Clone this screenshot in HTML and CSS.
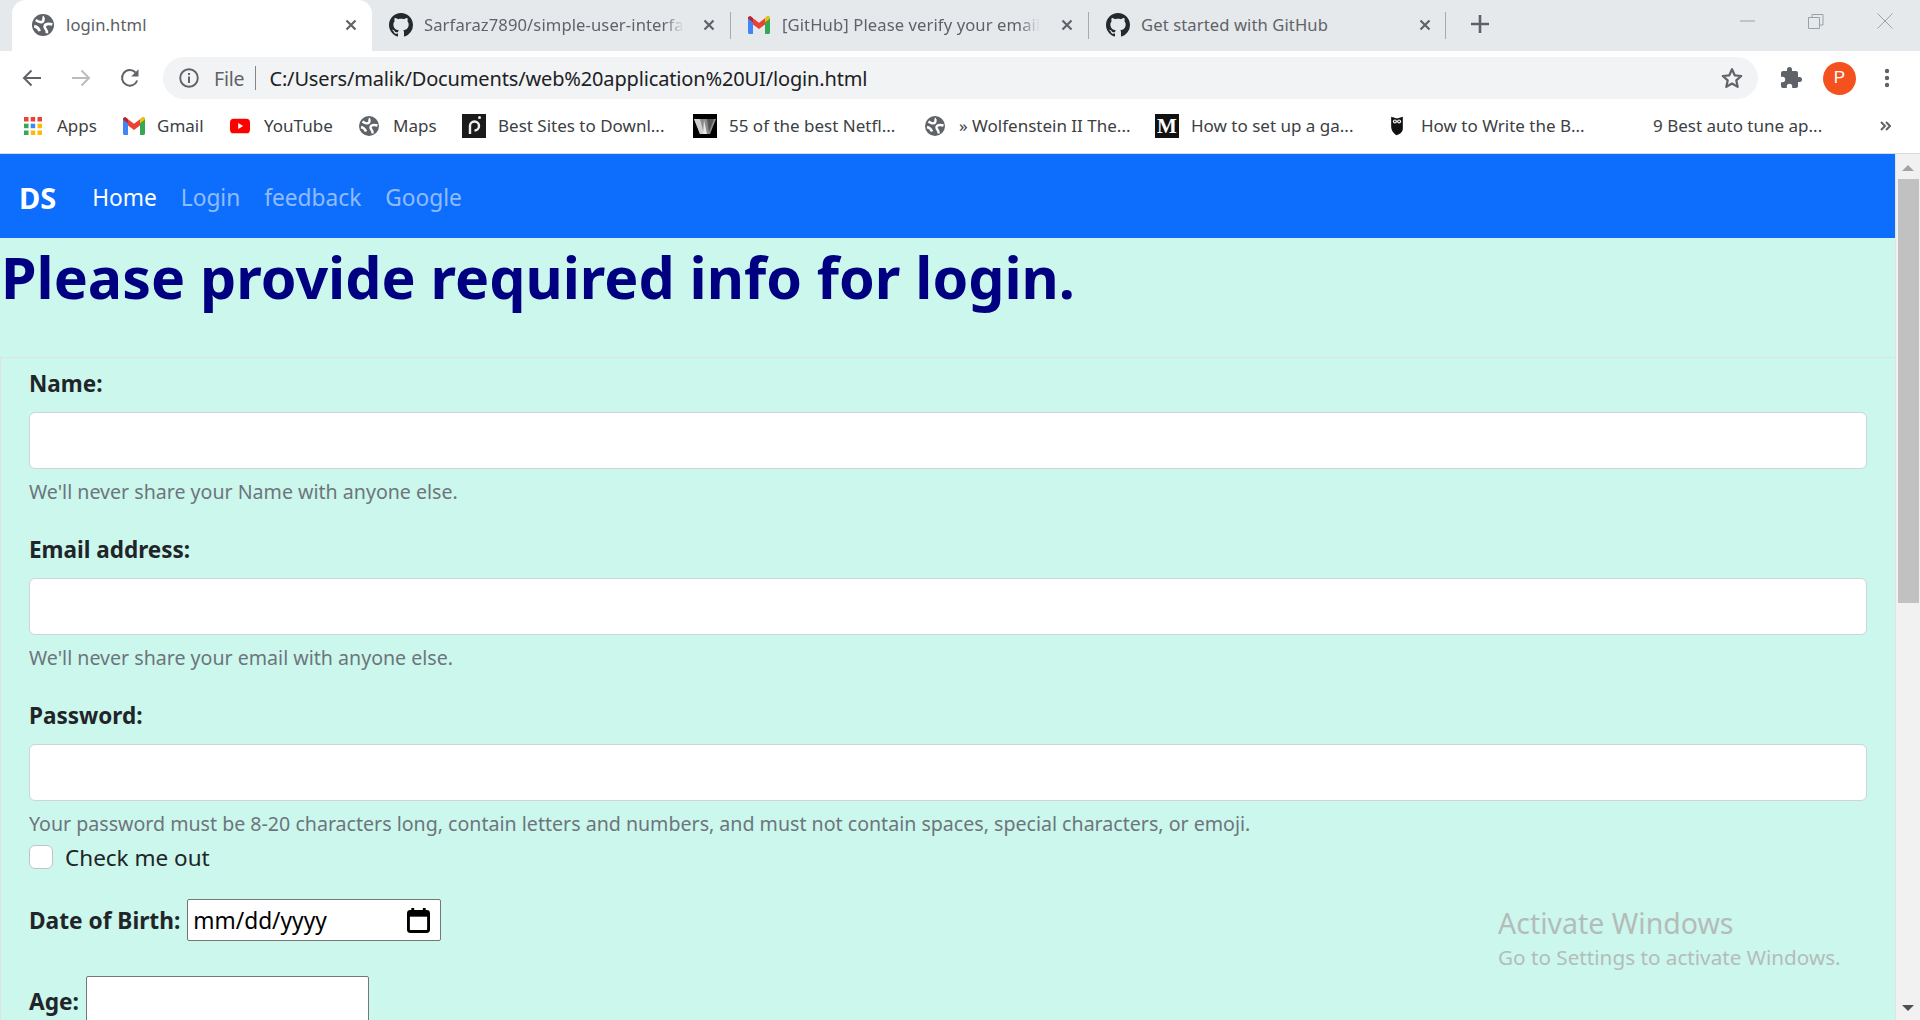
FILE: index.html
```html
<!DOCTYPE html>
<html lang="en">
<head>
<meta charset="utf-8">
<title>login.html</title>
<link rel="stylesheet" href="styles.css">
</head>
<body>
<svg class="defs" width="0" height="0" aria-hidden="true">
  <symbol id="gh" viewBox="0 0 16 16"><path fill="#24292e" d="M8 0C3.58 0 0 3.58 0 8c0 3.54 2.29 6.53 5.47 7.59.4.07.55-.17.55-.38 0-.19-.01-.82-.01-1.49-2.01.37-2.53-.49-2.69-.94-.09-.23-.48-.94-.82-1.13-.28-.15-.68-.52-.01-.53.63-.01 1.08.58 1.23.82.72 1.21 1.87.87 2.33.66.07-.52.28-.87.51-1.07-1.78-.2-3.64-.89-3.64-3.95 0-.87.31-1.59.82-2.15-.08-.2-.36-1.02.08-2.12 0 0 .67-.21 2.2.82.64-.18 1.32-.27 2-.27.68 0 1.36.09 2 .27 1.53-1.04 2.2-.82 2.2-.82.44 1.1.16 1.92.08 2.12.51.56.82 1.27.82 2.15 0 3.07-1.87 3.75-3.65 3.95.29.25.54.73.54 1.48 0 1.07-.01 1.93-.01 2.2 0 .21.15.46.55.38A8.013 8.013 0 0016 8c0-4.42-3.58-8-8-8z"/></symbol>
  <symbol id="globe" viewBox="0 0 20 20"><circle cx="10" cy="10" r="10" fill="#5f6368"/><path fill="none" stroke="#fff" stroke-width="2.400" d="M3.500 5.500C6 7.500 9 8 10 6.500S10 3 11 2.500M18.500 9.500C15 8.500 11.500 9 11.500 11.500S14 13.500 13.500 17.500M2 11C4 11.500 6 12.500 7 15.500"/></symbol>
  <symbol id="gmail" viewBox="0 0 22 18"><path fill="#4285f4" d="M0 2.5C0 .8 1.8-.3 3.2.8L5 2.2V18H1.5C.7 18 0 17.3 0 16.5z"/><path fill="#34a853" d="M17 2.2 18.8.8C20.2-.3 22 .8 22 2.5v14c0 .8-.7 1.500-1.500 1.500H17z"/><path fill="#ea4335" d="M5 2.200 11 6.800 17 2.200V8.500L11 13 5 8.500z"/><path fill="#c5221f" d="M0 2.500 5 6.300V2.200L3.200.8C1.800-.3 0 .8 0 2.500z"/><path fill="#fbbc04" d="M22 2.500 17 6.300V2.200L18.800.8C20.200-.3 22 .8 22 2.500z"/></symbol>
  <symbol id="close" viewBox="0 0 14 14"><path d="M2.500 2.500 11.500 11.500M11.500 2.500 2.500 11.500" stroke="#5f6368" stroke-width="2.200" fill="none"/></symbol>
</svg>

<div class="window">
  <header class="tabstrip">
    <div class="tab tab-active">
      <svg class="tab-icon globe-small"><use href="#globe"/></svg>
      <span class="tab-title">login.html</span>
      <svg class="tab-close"><use href="#close"/></svg>
    </div>
    <div class="tab">
      <svg class="tab-icon"><use href="#gh"/></svg>
      <span class="tab-title tab-fade">Sarfaraz7890/simple-user-interfa</span>
      <svg class="tab-close"><use href="#close"/></svg>
    </div>
    <div class="tab tab-sep">
      <svg class="tab-icon gmail-tab"><use href="#gmail"/></svg>
      <span class="tab-title tab-fade">[GitHub] Please verify your email</span>
      <svg class="tab-close"><use href="#close"/></svg>
    </div>
    <div class="tab tab-sep tab-last">
      <svg class="tab-icon"><use href="#gh"/></svg>
      <span class="tab-title">Get started with GitHub</span>
      <svg class="tab-close"><use href="#close"/></svg>
    </div>
    <svg class="new-tab" viewBox="0 0 18 18"><path d="M9 0V18M0 9H18" stroke="#5f6368" stroke-width="2.600"/></svg>
    <div class="win-controls">
      <svg class="win-btn" viewBox="0 0 16 16"><path d="M1 8H16" stroke="#9aa0a6"/></svg>
      <svg class="win-btn" viewBox="0 0 16 16"><path d="M.5 4.500H11.500V15.500H.5ZM4 4.500V1.500H15V12H11.500" stroke="#9aa0a6" fill="none"/></svg>
      <svg class="win-btn" viewBox="0 0 16 16"><path d="M.5.5 15.500 15.500M15.500.5.500 15.500" stroke="#9aa0a6" fill="none"/></svg>
    </div>
  </header>

  <div class="toolbar">
    <svg class="nav-icon" viewBox="0 0 22 22"><path d="M20 11H3M10.500 3.500 3 11l7.500 7.500" stroke="#5f6368" stroke-width="2" fill="none"/></svg>
    <svg class="nav-icon" viewBox="0 0 22 22"><path d="M2 11H19M11.500 3.500 19 11l-7.500 7.500" stroke="#babcbe" stroke-width="2" fill="none"/></svg>
    <svg class="nav-icon" viewBox="0 0 22 22"><path d="M18.200 13.500A7.800 7.800 0 1 1 16.500 5.500" stroke="#5f6368" stroke-width="2" fill="none"/><path d="M19.500 2.200V9.500H12.200Z" fill="#5f6368"/></svg>
    <div class="omnibox">
      <svg class="info-icon" viewBox="0 0 20 20"><circle cx="10" cy="10" r="8.800" fill="none" stroke="#5f6368" stroke-width="1.900"/><path d="M9 5h2v2H9zM9 8.500h2V15H9z" fill="#5f6368"/></svg>
      <span class="scheme">File</span>
      <span class="omni-sep"></span>
      <span class="url">C:/Users/malik/Documents/web%20application%20UI/login.html</span>
      <svg class="star" viewBox="0 0 24 24"><path d="M12 3.200 14.700 9.300 21.200 10 16.300 14.400 17.700 20.900 12 17.500 6.300 20.900 7.700 14.400 2.800 10 9.300 9.300Z" fill="none" stroke="#5f6368" stroke-width="2.200" stroke-linejoin="round"/></svg>
    </div>
    <svg class="ext" viewBox="0 0 22 22"><path fill="#5f6368" d="M19.500 10H18V6a2 2 0 0 0-2-2h-4V2.500a2.500 2.500 0 0 0-5 0V4H3a2 2 0 0 0-2 2v3.800h1.500a2.700 2.700 0 0 1 0 5.400H1V19a2 2 0 0 0 2 2h3.800v-1.500a2.700 2.700 0 0 1 5.400 0V21H16a2 2 0 0 0 2-2v-4h1.500a2.500 2.500 0 0 0 0-5z"/></svg>
    <div class="avatar">P</div>
    <svg class="dots" viewBox="0 0 6 20"><circle cx="3" cy="3" r="2.200"/><circle cx="3" cy="10" r="2.200"/><circle cx="3" cy="17" r="2.200"/></svg>
  </div>

  <nav class="bookmarks">
    <a class="bm">
      <svg class="bm-icon" viewBox="0 0 20 20"><g fill="#ea4335"><rect x="1" y="1" width="4.500" height="4.500"/><rect x="7.700" y="1" width="4.500" height="4.500"/><rect x="14.500" y="1" width="4.500" height="4.500"/></g><rect x="1" y="7.700" width="4.500" height="4.500" fill="#34a853"/><rect x="7.700" y="7.700" width="4.500" height="4.500" fill="#4285f4"/><rect x="14.500" y="7.700" width="4.500" height="4.500" fill="#fbbc04"/><rect x="1" y="14.500" width="4.500" height="4.500" fill="#34a853"/><rect x="7.700" y="14.500" width="4.500" height="4.500" fill="#fbbc04"/><rect x="14.500" y="14.500" width="4.500" height="4.500" fill="#fbbc04"/></svg>
      <span>Apps</span>
    </a>
    <a class="bm bm-tight"><svg class="bm-icon bm-gmail"><use href="#gmail"/></svg><span>Gmail</span></a>
    <a class="bm"><svg class="bm-icon" viewBox="0 0 22 22"><rect y="3" width="22" height="16" rx="4" fill="#f00"/><path d="M9 7.800v6.400l5.500-3.200z" fill="#fff"/></svg><span>YouTube</span></a>
    <a class="bm"><svg class="bm-icon"><use href="#globe"/></svg><span>Maps</span></a>
    <a class="bm bm-tight">
      <svg class="bm-icon bm-square" viewBox="0 0 24 24"><rect width="24" height="24" fill="#1a1a1a"/><path d="M8 20V12a4.500 4.500 0 1 1 4.500 4.500" stroke="#f0f0f0" stroke-width="2.400" fill="none"/><circle cx="17.500" cy="3.500" r="1.500" fill="#f0f0f0"/></svg>
      <span>Best Sites to Downl...</span>
    </a>
    <a class="bm bm-tight">
      <svg class="bm-icon bm-square" viewBox="0 0 24 24"><rect width="24" height="24"/><path d="M1 5H23L17 20H7Z" fill="#8a8a8a"/><path d="M7 5 11 20H7L1 5Z" fill="#cfcfcf"/><path d="M11 6 14 20H10Z" fill="#e8e8e8"/><path d="M14 5H21L16 18Z" fill="#555"/></svg>
      <span>55 of the best Netfl...</span>
    </a>
    <a class="bm"><svg class="bm-icon"><use href="#globe"/></svg><span>» Wolfenstein II The...</span></a>
    <a class="bm bm-tight"><span class="bm-icon bm-square bm-medium">M</span><span>How to set up a ga...</span></a>
    <a class="bm">
      <svg class="bm-icon" viewBox="0 0 20 24"><path d="M3 1 10 3 17 1V15C17 19 14 22 9 23C5 20 3 17 3 13Z" fill="#111"/><circle cx="7.500" cy="6.500" r="2.400" fill="#fff"/><circle cx="12.500" cy="6.500" r="2.400" fill="#fff"/><circle cx="7.500" cy="6.500" r="1" fill="#111"/><circle cx="12.500" cy="6.500" r="1" fill="#111"/></svg>
      <span>How to Write the B...</span>
    </a>
    <a class="bm"><span>9 Best auto tune ap...</span></a>
    <svg class="bm-more" viewBox="0 0 12 12"><path d="M2 2 6 6 2 10M7 2 11 6 7 10" fill="none" stroke="#5f6368" stroke-width="2"/></svg>
  </nav>

  <div class="viewport">
    <main class="page">
      <div class="navbar">
        <a class="brand">DS</a>
        <a class="nav-link nav-active">Home</a>
        <a class="nav-link">Login</a>
        <a class="nav-link">feedback</a>
        <a class="nav-link">Google</a>
      </div>
      <h1 class="title">Please provide required info for login.</h1>
      <form class="login-form">
        <div class="field">
          <label class="label">Name:</label>
          <input class="control" type="text">
          <div class="help">We'll never share your Name with anyone else.</div>
        </div>
        <div class="field">
          <label class="label">Email address:</label>
          <input class="control" type="text">
          <div class="help">We'll never share your email with anyone else.</div>
        </div>
        <div class="field field-last">
          <label class="label">Password:</label>
          <input class="control" type="text">
          <div class="help">Your password must be 8-20 characters long, contain letters and numbers, and must not contain spaces, special characters, or emoji.</div>
        </div>
        <div class="check">
          <span class="check-box"></span>
          <span>Check me out</span>
        </div>
        <div class="inline-row row-dob">
          <label class="label-inline">Date of Birth:</label>
          <div class="native native-date">
            <span>mm/dd/yyyy</span>
            <svg class="cal" viewBox="0 0 24 26"><path d="M6 0v4M18 0v4" stroke="#000" stroke-width="3"/><rect x="1.500" y="3.500" width="21" height="21" rx="2" fill="none" stroke="#000" stroke-width="3"/><rect x="1.500" y="4" width="21" height="5" fill="#000"/></svg>
          </div>
        </div>
        <div class="inline-row row-age">
          <label class="label-inline">Age:</label>
          <div class="native native-age"></div>
        </div>
      </form>
      <div class="watermark">
        <div class="wm-title">Activate Windows</div>
        <div class="wm-sub">Go to Settings to activate Windows.</div>
      </div>
    </main>
    <aside class="scrollbar">
      <span class="arrow-up"></span>
      <span class="thumb"></span>
      <span class="arrow-down"></span>
    </aside>
  </div>
</div>
</body>
</html>
```
FILE: styles.css
```css
* { box-sizing: border-box; }
html, body { margin: 0; height: 100%; overflow: hidden; }
body { font-family: "Noto Sans", "Open Sans", sans-serif; background: #fff; color: #212529; }
.defs { position: absolute; }
.window { height: 1020px; display: flex; flex-direction: column; }

/* tab strip */
.tabstrip { height: 51px; background: #e6e9ec; display: flex; align-items: stretch; padding-left: 12px; flex: none; }
.tab { width: 358px; display: flex; align-items: center; padding: 0 14px 2px 18px; font-size: 16.600px; letter-spacing: .1px; color: #5f6368; position: relative; border-radius: 14px 14px 0 0; }
.tab-active { background: #fff; width: 360px; padding-left: 20px; color: #5a5e63; }
.tab:nth-child(2) { padding-left: 17px; }
.tab-sep::before { content: ""; position: absolute; left: 0; top: 12px; height: 27px; width: 1px; background: #a8abae; }
.tab-last::after { content: ""; position: absolute; right: 0; top: 12px; height: 27px; width: 1px; background: #a8abae; }
.tab-icon { width: 24px; height: 24px; flex: none; margin-right: 11px; }
.globe-small { width: 22px; height: 22px; margin-right: 12px; }
.gmail-tab { width: 22px; height: 18px; margin-right: 12px; }
.tab-title { flex: none; white-space: nowrap; }
.tab-fade { -webkit-mask-image: linear-gradient(90deg, #000 92%, transparent 100%); mask-image: linear-gradient(90deg, #000 92%, transparent 100%); }
.tab-close { width: 14px; height: 14px; flex: none; margin-left: auto; }
.new-tab { width: 18px; height: 18px; margin: 15px 0 0 25px; flex: none; }
.win-controls { margin-left: auto; display: flex; gap: 53px; padding: 13px 27px 0 0; }
.win-btn { width: 16px; height: 16px; }

/* toolbar */
.toolbar { height: 54px; flex: none; display: flex; align-items: center; padding-left: 21px; }
.nav-icon { width: 22px; height: 22px; margin-right: 27px; flex: none; }
.nav-icon:nth-child(3) { margin-right: 22px; }
.omnibox { width: 1595px; height: 42px; border-radius: 21px; background: #f1f3f4; display: flex; align-items: center; padding: 0 12px 0 16px; flex: none; }
.info-icon { width: 20px; height: 20px; flex: none; margin-right: 15px; }
.scheme { font-size: 19.500px; letter-spacing: -.2px; color: #5f6368; }
.omni-sep { width: 1px; height: 24px; background: #80868b; margin: 0 13px 0 11px; }
.url { font-size: 20px; letter-spacing: -.15px; color: #202124; flex: 1; }
.star { width: 24px; height: 24px; flex: none; margin-right: 2px; }
.ext { width: 22px; height: 22px; margin-left: 22px; flex: none; }
.avatar { width: 33px; height: 33px; border-radius: 50%; background: #f4511e; color: #fff; font-family: "Liberation Sans", sans-serif; font-size: 17px; display: flex; align-items: center; justify-content: center; margin-left: 21px; flex: none; }
.dots { width: 6px; height: 20px; fill: #5f6368; margin-left: 28px; flex: none; }

/* bookmarks */
.bookmarks { height: 49px; flex: none; border-bottom: 1px solid #d9dbdc; display: grid; grid-template-columns: 100px 107px 129px 103px 231px 232px 230px 232px 266px 190px 1fr; align-items: center; padding: 0 0 7px 23px; font-size: 17px; color: #3c4043; }
.bm { display: flex; align-items: center; gap: 14px; white-space: nowrap; }
.bm-tight { gap: 12px; }
.bm-icon { width: 20px; height: 20px; flex: none; }
.bm-gmail { width: 22px; height: 18px; }
.bm-square { width: 24px; height: 24px; }
.bm-medium { background: #111; color: #fff; font-family: "Liberation Serif", serif; font-weight: 700; font-size: 21px; line-height: 24px; text-align: center; }
.bm-more { width: 12px; height: 12px; justify-self: start; margin-left: 36px; }

/* page */
.viewport { flex: 1; display: flex; min-height: 0; }
.page { flex: 1; min-width: 0; background: #ccf7ec; position: relative; overflow: hidden; }
.navbar { height: 84px; background: #0d6efd; display: flex; align-items: center; padding: 2px 0 0 19px; font-size: 22.700px; }
.brand { color: #fff; font-weight: 700; font-size: 29px; margin-right: 36px; }
.nav-link { color: rgba(255,255,255,.55); margin-right: 24px; }
.nav-active { color: #fff; }
.title { margin: 0; height: 119px; padding: 5px 0 0 1px; font-size: 57.300px; line-height: 68px; font-weight: 700; color: #000080; white-space: nowrap; }
.login-form { border: 1px solid #dde3e4; border-right: 0; padding: 10px 28px 60px; }
.field { margin-bottom: 27px; }
.field-last { margin-bottom: 0; }
.label { display: block; font-size: 22.500px; line-height: 32px; font-weight: 700; margin-bottom: 12px; }
.control { display: block; width: 100%; height: 57px; background: #fff; border: 1px solid #ced4da; border-radius: 6px; }
.help { font-size: 19.600px; line-height: 30px; margin-top: 8px; color: #6c757d; white-space: nowrap; }
.check { display: flex; align-items: center; gap: 12px; font-size: 22.500px; height: 34px; margin-top: 1px; }
.check-box { width: 24px; height: 24px; background: #fff; border: 1px solid #bfc4c8; border-radius: 6px; }
.inline-row { display: flex; align-items: center; gap: 7px; }
.row-dob { margin-top: 25px; }
.row-age { margin-top: 35px; }
.label-inline { font-size: 22.700px; font-weight: 700; }
.native { background: #fff; border: 1px solid #767676; border-radius: 2px; }
.native-date { width: 254px; height: 42px; display: flex; align-items: center; justify-content: space-between; padding: 0 10px 0 5px; font-size: 22.700px; color: #000; }
.native-age { width: 283px; height: 50px; }
.cal { width: 23px; height: 25px; }
.watermark { position: absolute; left: 1498px; top: 751px; color: #b4bcb9; }
.wm-title { font-size: 28.500px; line-height: 36px; }
.wm-sub { font-size: 20.700px; line-height: 33px; }

/* scrollbar */
.scrollbar { width: 25px; flex: none; background: #f1f1f1; display: flex; flex-direction: column; align-items: center; border-left: 1px solid #e3e3e3; }
.arrow-up { width: 0; height: 0; border: 6px solid transparent; border-top: 0; border-bottom: 6px solid #a3a3a3; margin-top: 11px; }
.thumb { width: 21px; height: 424px; background: #c1c1c1; margin-top: 8px; }
.arrow-down { width: 0; height: 0; border: 6px solid transparent; border-bottom: 0; border-top: 6px solid #505050; margin-top: auto; margin-bottom: 9px; }
```
